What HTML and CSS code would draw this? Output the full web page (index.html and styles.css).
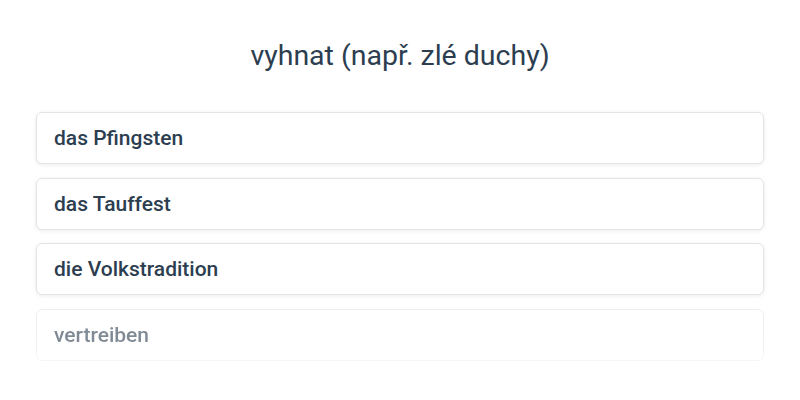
FILE: index.html
```html
<!DOCTYPE html>
<html lang="cs">
<head>
  <meta charset="UTF-8" />
  <title>Kvíz</title>
  <link rel="stylesheet" href="styles.css">
</head>
<body>

<div class="quiz">
  <h2 class="question">vyhnat (např. zlé duchy)</h2>
  <div class="options">
    <div class="option">das Pfingsten</div>
    <div class="option">das Tauffest</div>
    <div class="option">die Volkstradition</div>
    <div class="option faded">vertreiben</div>
  </div>
</div>

</body>
</html>
```

FILE: styles.css
```css
body { font-family: Roboto, "Noto Sans", sans-serif; margin: 0; padding: 0; background: #fff; color: #2c3e50; }
.quiz { padding: 37px 36px 0; }
.question { margin: 0 0 37px; text-align: center; font-size: 28.5px; font-weight: 400; line-height: 38px; color: #2c3e50; }
.options { display: flex; flex-direction: column; gap: 13.6px; }
.option { height: 50px; padding: 0 17px; display: flex; align-items: center; border: 1px solid #e2e4e7; border-radius: 6px;
          background: #fff; box-shadow: 0 1px 4px rgba(0,0,0,0.08); font-size: 21px; font-weight: 500; color: #2c3e50; }
.option.faded { opacity: 0.6; -webkit-mask-image: linear-gradient(to bottom, #000 60%, rgba(0,0,0,0.55) 100%);
                mask-image: linear-gradient(to bottom, #000 60%, rgba(0,0,0,0.55) 100%); }
```
